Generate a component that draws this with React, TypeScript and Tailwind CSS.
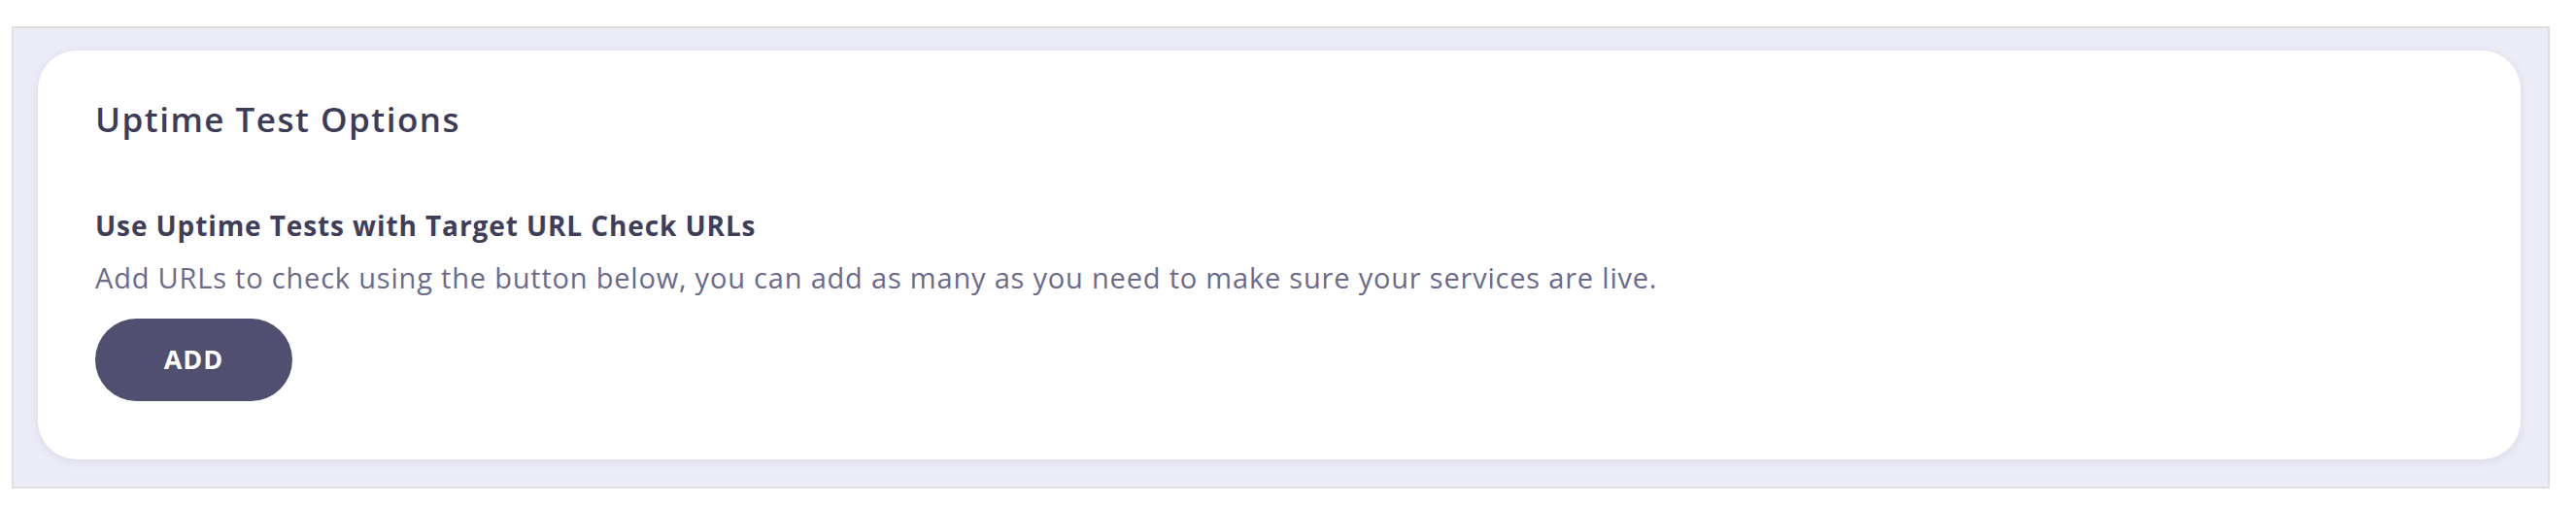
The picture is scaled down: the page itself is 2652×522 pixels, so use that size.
import React from 'react';

const UptimeTestOptions = () => {
  const handleAdd = () => {};

  return (
    <div className="min-h-[522px] bg-white pl-[12px] pt-[27px]" style={{ fontFamily: '"Open Sans", "Liberation Sans", sans-serif' }}>
      <div className="w-[2613px] h-[476px] border-2 border-[#e0e0e3] bg-[#ececf7] pl-[25px] pt-[23px]">
        <div className="w-[2556px] h-[421px] rounded-[40px] bg-white shadow-[0_2px_10px_rgba(90,90,140,0.12)] pl-[59px] pt-[51px]">
          {/* title */}
          <h2 className="text-[35px] leading-[40px] tracking-[1.5px] font-semibold text-[#3d3c58]">Uptime Test Options</h2>

          <div className="mt-[71px]">
            <p className="text-[28px] leading-[36px] tracking-[0.9px] font-bold text-[#3f3e5a]">
              Use Uptime Tests with Target URL Check URLs
            </p>
            <p className="mt-[18px] text-[29px] leading-[36px] tracking-[0.8px] text-[#6b6a8b]">
              Add URLs to check using the button below, you can add as many as you need to make sure your services are live.
            </p>
          </div>

          <button
            onClick={handleAdd}
            className="mt-[24px] flex h-[85px] w-[203px] items-center justify-center rounded-full bg-[#504f70] text-[27px] tracking-[1px] font-bold text-white"
          >
            ADD
          </button>
        </div>
      </div>
    </div>
  );
};

export default UptimeTestOptions;
